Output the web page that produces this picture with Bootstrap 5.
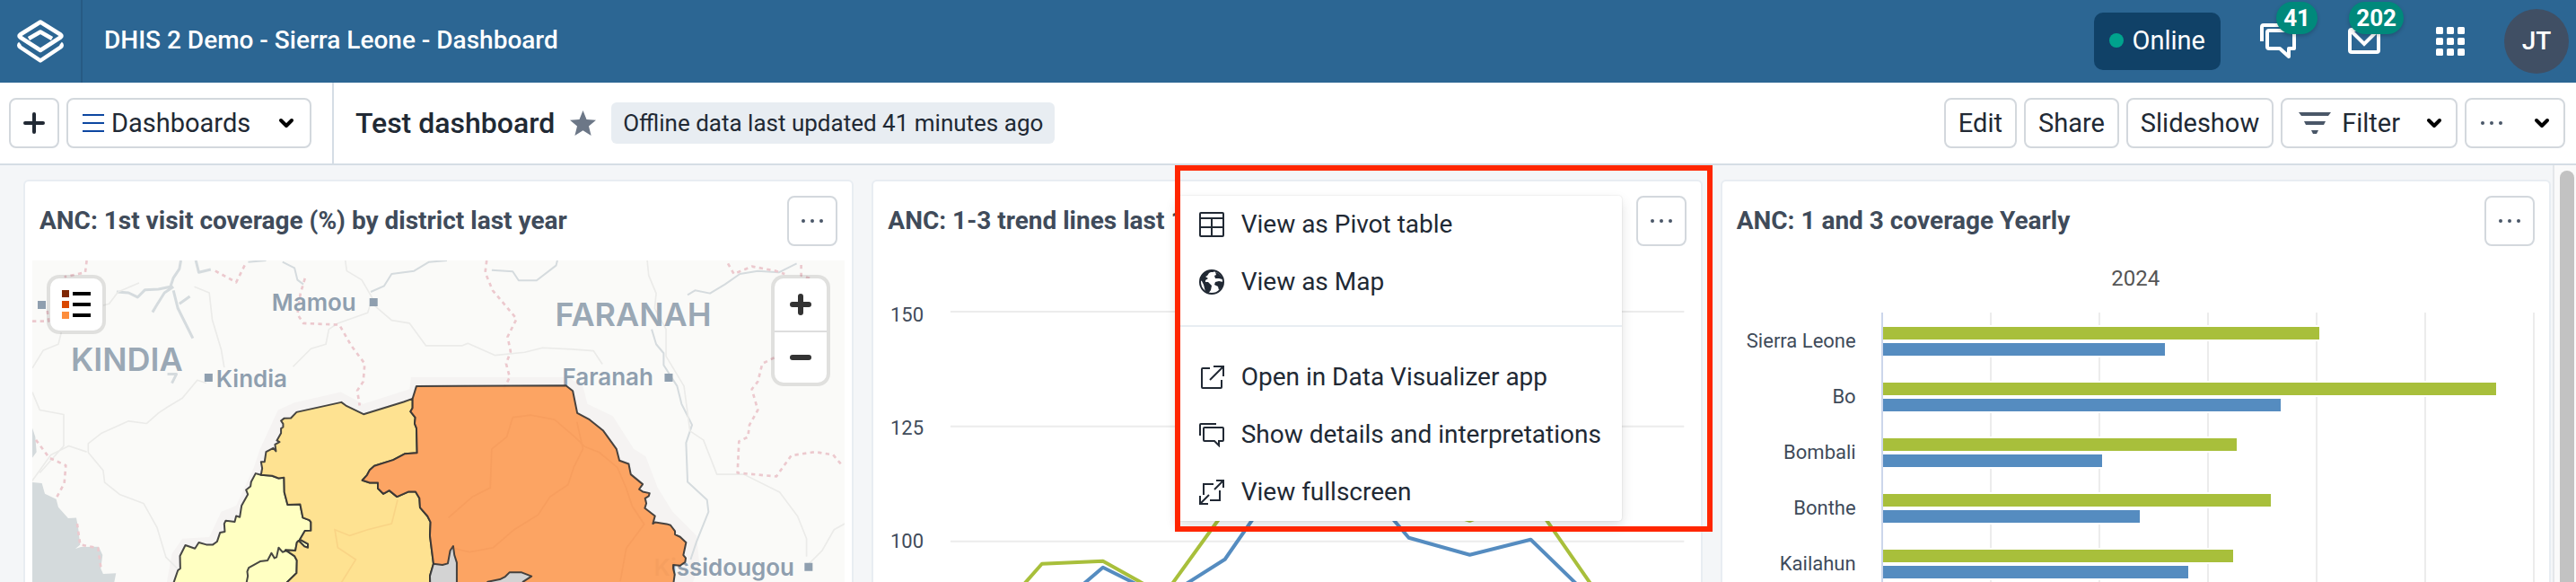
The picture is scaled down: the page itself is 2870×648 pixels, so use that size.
<!DOCTYPE html>
<html lang="en">
<head>
<meta charset="utf-8">
<meta name="viewport" content="width=device-width, initial-scale=1">
<title>DHIS 2 Demo - Sierra Leone - Dashboard</title>
<link href="https://cdn.jsdelivr.net/npm/bootstrap@5.3.0/dist/css/bootstrap.min.css" rel="stylesheet">
<style>
  :root { --line: #d5dde5; --ink: #212934; --slate: #404b5a; --green: #a8bf3b; --blue: #558cc0; }
  body { font-family: Roboto, "Liberation Sans", sans-serif; font-size: 28px; line-height: 32px; color: var(--ink); background: #f4f6f8; }
  svg { display: block; flex-shrink: 0; }

  .app-header { height: 92px; background: #2c6693; color: #fff; }
  .app-logo { width: 92px; border-right: 2px solid #275a84; }
  .app-name { padding: 0 0 2px 24px; font-weight: 500; }
  .status-pill { height: 64px; padding: 0 17px 2px; gap: 10px; margin-right: 16px; border-radius: 10px; background: #104167; font-size: 29px; }
  .status-dot { width: 16px; height: 16px; border-radius: 50%; background: #00a38d; }
  .header-btn { width: 96px; color: #fff; }
  .count-badge { position: absolute; top: 2px; right: 4px; height: 36px; padding: 0 8px; border-radius: 18px; background: #00897b; font-size: 26px; line-height: 36px; font-weight: 700; box-shadow: 0 2px 4px rgba(0,0,0,.2); }
  .avatar { width: 72px; height: 72px; margin: 0 8px 0 12px; border-radius: 50%; background: #404f64; color: #fff; font-weight: 500; }

  .toolbar { height: 92px; background: #fff; border-bottom: 2px solid var(--line); }
  .toolbar-start { width: 372px; padding-left: 10px; gap: 8px; border-right: 2px solid var(--line); }
  .toolbar-title { padding-left: 24px; gap: 17px; }
  .toolbar-title h1 { font-size: 32px; line-height: 36px; font-weight: 500; }
  .info-tag { padding: 7px 13px; border-radius: 6px; background: #e8edf2; font-size: 26px; }
  .toolbar-end { gap: 8px; padding-right: 12px; }
  .tool-btn { height: 56px; padding: 0 14px; border: 2px solid #d3d8dd; border-radius: 8px; background: #fff; color: var(--ink); font-size: 29px; line-height: 32px; white-space: nowrap; }
  .square-btn { width: 56px; padding: 0; }
  .more-btn { width: 112px; }

  .board { padding: 16px 2px 0 26px; }
  .board .row { --bs-gutter-x: 20px; }
  .tile { border: 2px solid #e8edf2; border-radius: 6px; background: #fff; }
  .tile-head { padding: 16px; }
  .tile-head h2 { font-size: 28px; line-height: 32px; font-weight: 700; color: var(--slate); }
  .scroll-track { width: 26px; border-left: 2px solid #e4e7ea; background: #fafafa; padding: 6px 2px 0 6px; }
  .scroll-thumb { height: 1200px; border-radius: 8px; background: #c2c2c2; }

  .map-box { margin: 0 8px; background: #fafaf8; }
  .map-ctrl { position: absolute; top: 16px; border: 4px solid rgba(0,0,0,.1); border-radius: 14px; background: #fff; background-clip: padding-box; }
  .map-ctrl button { width: 58px; height: 58px; }
  .map-ctrl button + button { border-top: 2px solid #ddd !important; }
  .legend-ctrl { left: 16px; }
  .zoom-ctrl { right: 16px; }

  .item-menu { display: block; top: 18px; right: 100px; width: 496px; padding: 0; border: 0; border-radius: 4px; box-shadow: 0 0 2px rgba(0,0,0,.14), 0 6px 14px rgba(0,0,0,.12); font-size: 28px; }
  .item-menu .dropdown-item { height: 64px; padding: 0 25px; gap: 19px; color: var(--ink); }
  .item-menu .dropdown-divider { margin: 16px 0 24px; border-top: 2px solid #e8edf2; opacity: 1; }
  .callout-frame { position: absolute; top: -16px; left: 348px; right: -1px; height: 408px; border: 6px solid #ff2600; z-index: 1001; pointer-events: none; }

  .chart-title { height: 58px; padding-top: 4px; font-size: 24px; color: #555; }
  .bar-row { height: 62px; padding-right: 16px; }
  .bar-label { width: 149px; margin-right: 28px; padding-top: 2px; font-size: 22px; color: var(--slate); }
  .bar-plot { padding-top: 14px; border-left: 2px solid #ccd6eb; background: repeating-linear-gradient(to right, transparent 0, transparent calc(100% / 6 - 2px), #ececec calc(100% / 6 - 2px), #ececec calc(100% / 6)); }
  .bar { height: 18px; border: solid #fff; border-width: 2px 2px 2px 0; }
  .bar-green { background: var(--green); }
  .bar-blue { background: var(--blue); }
</style>
</head>
<body>
<div class="d-flex flex-column vh-100 overflow-hidden">

  <header class="app-header d-flex align-items-center flex-shrink-0">
    <a href="#" class="app-logo h-100 d-flex align-items-center justify-content-center" aria-label="Home">
      <svg width="56" height="56" viewBox="14 16 56 56" fill="none" stroke="#fff" stroke-width="4.5" stroke-linejoin="round">
        <path d="M42 22.500 64.500 36.500Q66.500 38 64.500 39.500L42 54 19.500 39.500Q17.500 38 19.500 36.500Z"/>
        <path d="M29 41 42 33.500 55 41"/>
        <path d="M19.500 46.500Q17 48.500 19.500 50.500L42 65.500 64.500 50.500Q67 48.500 64.500 46.500"/>
      </svg>
    </a>
    <span class="app-name">DHIS 2 Demo - Sierra Leone - Dashboard</span>
    <div class="status-pill ms-auto d-flex align-items-center"><span class="status-dot"></span>Online</div>
    <button class="header-btn btn p-0 h-100 rounded-0 border-0 position-relative d-flex align-items-center justify-content-center" aria-label="Interpretations">
      <svg width="48" height="48" viewBox="2514 20 48 48" fill="none" stroke="#fff" stroke-width="4"><path d="M2520 44V28q0-2 2-2h20"/><path d="M2528 32h26q2 0 2 2v18h-6v9l-10-9h-12q-2 0-2-2V34q0-2 2-2z" stroke-linejoin="round"/></svg>
      <span class="count-badge">41</span>
    </button>
    <button class="header-btn btn p-0 h-100 rounded-0 border-0 position-relative d-flex align-items-center justify-content-center" aria-label="Messages">
      <svg width="48" height="48" viewBox="2610 20 48 48" fill="none" stroke="#fff" stroke-width="4"><path d="M2620 31h28q2 0 2 2v21q0 2-2 2h-28q-2 0-2-2V33q0-2 2-2z"/><path d="M2618 31l16 16 16-16"/></svg>
      <span class="count-badge">202</span>
    </button>
    <button class="header-btn btn p-0 h-100 rounded-0 border-0 d-flex align-items-center justify-content-center" aria-label="Apps">
      <svg width="32" height="32" fill="#fff"><rect width="8" height="8" rx="1.500"/><rect x="12" width="8" height="8" rx="1.500"/><rect x="24" width="8" height="8" rx="1.500"/><rect y="12" width="8" height="8" rx="1.500"/><rect x="12" y="12" width="8" height="8" rx="1.500"/><rect x="24" y="12" width="8" height="8" rx="1.500"/><rect y="24" width="8" height="8" rx="1.500"/><rect x="12" y="24" width="8" height="8" rx="1.500"/><rect x="24" y="24" width="8" height="8" rx="1.500"/></svg>
    </button>
    <button class="avatar border-0 p-0">JT</button>
  </header>

  <nav class="toolbar d-flex align-items-center flex-shrink-0" aria-label="Dashboard">
    <div class="toolbar-start h-100 d-flex align-items-center">
      <button class="tool-btn square-btn d-flex align-items-center justify-content-center" aria-label="New dashboard">
        <svg width="24" height="24" stroke="#212934" stroke-width="4" stroke-linecap="round"><path d="M12 2v20M2 12h20"/></svg>
      </button>
      <button class="tool-btn d-flex align-items-center px-3">
        <svg class="me-2" width="24" height="20" stroke="#0d47a1" stroke-width="2"><path d="M0 1h24M0 10h24M0 19h24"/></svg>
        Dashboards
        <svg class="ms-4" width="26" height="12" fill="none" stroke="#000" stroke-width="4" stroke-linecap="round" stroke-linejoin="round"><path d="M10 3l6 6 6-6"/></svg>
      </button>
    </div>
    <div class="toolbar-title d-flex align-items-center">
      <h1 class="mb-0">Test dashboard</h1>
      <svg width="29" height="28" viewBox="0 0 29 28" fill="#6c7787"><path d="M14.500 0l4 10 10.500.7-8 6.900 2.600 10.400-9.100-5.700L5.400 28 8 17.600 0 10.700 10.500 10z"/></svg>
      <span class="info-tag">Offline data last updated 41 minutes ago</span>
    </div>
    <div class="toolbar-end ms-auto d-flex">
      <button class="tool-btn">Edit</button>
      <button class="tool-btn">Share</button>
      <button class="tool-btn">Slideshow</button>
      <button class="tool-btn d-flex align-items-center">
        <svg class="ms-1 me-2" width="36" height="24" fill="#4a5768"><path d="M0 0h36l-3 4H3zM6 10h24l-2 4H8zM14 20h8l-2 4h-4z"/></svg>
        <span class="px-1">Filter</span>
        <svg class="ms-3" width="28" height="12" fill="none" stroke="#000" stroke-width="4" stroke-linecap="round" stroke-linejoin="round"><path d="M12 3l6 6 6-6"/></svg>
      </button>
      <button class="tool-btn more-btn d-flex align-items-center justify-content-between" aria-label="More">
        <svg width="28" height="4" fill="#4a5768"><circle cx="4" cy="2" r="2"/><circle cx="14" cy="2" r="2"/><circle cx="24" cy="2" r="2"/></svg>
        <svg width="20" height="12" fill="none" stroke="#000" stroke-width="4" stroke-linecap="round" stroke-linejoin="round"><path d="M4 3l6 6 6-6"/></svg>
      </button>
    </div>
  </nav>

  <main class="d-flex flex-fill overflow-hidden">
    <div class="board flex-fill">
      <div class="row row-cols-3">

        <div class="col">
          <section class="tile h-100">
            <div class="tile-head d-flex align-items-center justify-content-between">
              <h2 class="mb-0">ANC: 1st visit coverage (%) by district last year</h2>
              <button class="tool-btn square-btn d-flex align-items-center justify-content-center" aria-label="Item menu"><svg width="24" height="4" fill="#4a5768"><circle cx="2" cy="2" r="2"/><circle cx="12" cy="2" r="2"/><circle cx="22" cy="2" r="2"/></svg></button>
            </div>
            <div class="map-box position-relative">
              <svg class="w-100 h-auto" viewBox="36 290 906 370" font-family="Inter, sans-serif" font-weight="600" fill="#8f9faf">
                <g transform="translate(0 270) scale(.3333)" fill="none" stroke-linejoin="round">
                  <path fill="#f5f3f2" d="M550 1180 575 1040 610 990 700 985 740 900 790 880 850 750 870 690 930 560 985 535 1140 500 1215 540 1370 490 1375 450 1900 450 1950 480 1965 540 2050 580 2120 690 2160 715 2200 820 2250 900 2330 980 2340 1080 2300 1180z"/>
                  <path fill="#d4dadc" d="M108 802l32 3 10 35 38 18 7 27 33 37 27-2 6 30 7 60-16 14 18-6 60-1 13 28-6 45 8 18 43-2-16 80H108zM108 620l10 30 4 50-14 20z"/>
                  <g stroke="#d5dbde" stroke-width="9">
                    <path d="M390 165l40 3 30 15 25-25 45-2 40-8 10-30 20-30 5-28M580 148l-30 20-25 40-15 25M580 160l15 60 30 60 20 40M600 205l35-25M655 60l10 40 40-10M560 440l30 0-15 30"/>
                    <path stroke-width="6" d="M830 65l60-5M945 65l40 20 10 40 20 15M1240 165l45-20 25-40 75-10 50-30 60-5M1645 92l70 5 20 30 60 0 65-50 5-20M2300 175l25-15 50 10 50-30 50-35 60-10 70 5 60-30M2180 290l15 50 25 30 0 40 45 70 15 60 35 70-20 60 5 130 65 60 5 40-40 100-20 60"/>
                  </g>
                  <g stroke="#ebebe9" stroke-width="5">
                    <path d="M345 210l20-5 30-40 70-30M205 300l-10 40-50 20-37 60M108 500l25 60 80 15 0 105-80 90M750 418l-10-60-30-100-10-90-50-20M690 470l-30-10-50 60-50 30-30 20-40 35-60-8-90 40-45 35 0 30 50 60 5 40 50 40 80 30 45 80 30 100 40 40M1155 60l5 35 50 30 35 60-15 50-100 35-30 20-10 50-50 15-60 60M1240 200l70 60 60 10 55 75 120 0 20-8 90 40 100-10 60-15 100 5 70 5 30 45M2165 60l5 50 25 60-5 50 38 70 0 90 60 100 20 150 45 30 45 115 90 0 120 60 60 80 30 75 0 60M2700 1080l50-50 40-70 36-20M290 700l-60-20-60 30-65 90"/>
                  </g>
                  <g stroke="#ecc9ce" stroke-width="8" stroke-dasharray="13 13">
                    <path d="M290 60l-5 40-70 15M108 263l55 0-5-35M720 95l70 38 30-60M1020 120l-15 50-10 70 20 30 120 5 40 70 45 60-5 60-20 30 8 50M120 660l45 60 55 25-5 60-30 55M258 940l10 70 60 12 10 70M1628 60l-5 40 25 60 80 95-30 60 10 50-15 40 12 45-20 40M2435 70l20 35 60-25 80 15 30 10M2680 75l0 35 30 10M2590 385l-40 20-15 60-20 25 20 70-28 50-5 40-30 15-5 105 130 12 50-70 80-12 60 10 30 35"/>
                  </g>
                </g>
                <g font-size="26">
                  <text x="303" y="346">Mamou</text><text x="241" y="431">Kindia</text>
                  <text x="627" y="429">Faranah</text><text x="729" y="641">Kissidougou</text><text x="22" y="346">a</text>
                </g>
                <g font-size="36" fill="#9aa8b5"><text x="79" y="413">KINDIA</text><text x="619" y="363">FARANAH</text></g>
                <path d="M42 335h9v9h-9zM412 332h9v9h-9zM228 416h9v9h-9zM741 416h9v9h-9zM897 627h9v9h-9z"/>
                <g transform="translate(0 270) scale(.3333)" stroke="#333" stroke-width="6" stroke-linejoin="round" fill-opacity=".95" stroke-opacity=".9">
                  <path fill="#ffffbf" d="M855 772l18 5 37 3 22 8 18-2 1 49 11 42 42-2 9 45 22 8 5 7v28l-20 1-17 29 27 15v12l-12-4-19-19-6 6-5 27-33-2 30 20 8 15-1 42-30 29-60 60H560l22-60 13-38 8-6-1-42 18-36 32 11 13-20 25 7h22l14-10 10-30 16-3-2-27 5-10 30 4 5-20 12 4 6-38 21-38-6-15 15-12 2-15z"/>
                  <path fill="none" d="M958 1030l-13 5-13-15-7 32-7 3-10-17-13 25-25 3-38 21-5 13 2 15-8 40"/>
                  <path fill="#fee08b" d="M1380 522 1350 533 1216 574 1157 545 1142 534 992 567 973 587 950 588 940 596 947 606 947 617 940 622 940 637 926 662 935 667 920 675 923 698 914 687 890 700 885 733 873 733 877 755 873 777 910 780 932 788 950 786 951 835 962 877 1004 875 1013 920 1035 928 1040 935 1040 963 1020 964 1003 993 1030 1008 1030 1020 1018 1016 999 997 993 1003 988 1030 955 1028 985 1048 993 1063 992 1105 962 1134 922 1174 1440 1174 1438 1115 1450 1074 1438 980 1440 935 1430 915 1405 886 1403 855 1390 833 1367 833 1328 850 1302 829 1282 840 1264 822 1264 803 1237 803 1212 795 1228 777 1237 760 1252 747 1315 727 1355 706 1395 703 1393 620 1387 605 1389 585 1373 565 1380 553z"/>
                  <path fill="#fc9f5b" d="M1393 480 1893 478 1916 496 1931 570 1972 592 2017 628 2062 690 2072 729 2103 740 2110 775 2150 808 2138 825 2150 833 2173 838 2170 848 2158 855 2162 872 2157 888 2191 914 2184 940 2192 935 2230 941 2243 945 2258 965 2258 976 2275 984 2295 1003 2286 1045 2294 1055 2292 1068 2275 1080 2252 1078 2252 1090 2257 1110 2248 1174 1450 1174 1450 1074 1438 980 1440 935 1430 915 1405 886 1403 855 1390 833 1367 833 1328 850 1302 829 1282 840 1264 822 1264 803 1237 803 1212 795 1228 777 1237 760 1252 747 1315 727 1355 706 1395 703 1393 620 1387 605 1389 585 1373 565 1380 553 1380 522z"/>
                  <path fill="#d3d3d3" fill-opacity="1" d="M1450 1074 1480 1078 1498 1073 1506 1030 1516 1015 1520 1045 1528 1070 1528 1174 1440 1174 1438 1115zM1592 1174 1632 1134 1672 1126 1690 1117 1704 1103 1745 1103 1778 1116 1750 1134 1720 1174z"/>
                </g>
                <g transform="translate(0 270) scale(.3333)" fill="none" stroke="#d9763d" stroke-opacity=".12" stroke-width="5">
                  <path d="M1500 920l80-70 60-30 5-130 50-40 20-65 60-8 80 15 70 60 30 30 50 20 60 50 30 70 20 60 40 60-60 80-20 110M1930 600l20 90-30 60-20 60-60 40-40 60-80 50-70 60-80 15-60-15M1330 860l-20 80-80 20-60 20-50-20 10 60 60 40-50 80"/>
                </g>
              </svg>
              <div class="map-ctrl legend-ctrl">
                <button class="btn p-0 border-0 d-flex align-items-center justify-content-center" aria-label="Legend">
                  <svg width="32" height="32"><path fill="#7f2704" d="M0 0h8v8H0z"/><path fill="#d94801" d="M0 12h8v8H0z"/><path fill="#fd8d3c" d="M0 24h8v8H0z"/><path d="M12 2h20v4H12zM12 14h20v4H12zM12 26h20v4H12z"/></svg>
                </button>
              </div>
              <div class="map-ctrl zoom-ctrl">
                <button class="btn p-0 border-0 rounded-0 d-flex align-items-center justify-content-center" aria-label="Zoom in"><svg width="24" height="24" stroke="#333" stroke-width="6" stroke-linecap="round"><path d="M12 3v18M3 12h18"/></svg></button>
                <button class="btn p-0 border-0 rounded-0 d-flex align-items-center justify-content-center" aria-label="Zoom out"><svg width="24" height="24" stroke="#333" stroke-width="6" stroke-linecap="round"><path d="M3 12h18"/></svg></button>
              </div>
            </div>
          </section>
        </div>

        <div class="col position-relative">
          <section class="tile h-100">
            <div class="tile-head d-flex align-items-center justify-content-between">
              <h2 class="mb-0">ANC: 1-3 trend lines last 12</h2>
              <button class="tool-btn square-btn d-flex align-items-center justify-content-center" aria-label="Item menu" aria-expanded="true"><svg width="24" height="4" fill="#4a5768"><circle cx="2" cy="2" r="2"/><circle cx="12" cy="2" r="2"/><circle cx="22" cy="2" r="2"/></svg></button>
            </div>
            <svg class="w-100 h-auto" viewBox="974 290 922 370">
              <path d="M1060 347h818M1060 475h818M1060 603h818" stroke="#ececec" stroke-width="2"/>
              <g font-size="22" fill="#404b5a"><text x="993" y="358">150</text><text x="993" y="484">125</text><text x="993" y="610">100</text></g>
              <g fill="none" stroke-width="4" stroke-linejoin="round">
                <path stroke="#a8bf3b" d="M1094 705l68-77 68-3 68 38 68-94 68-80 69 20 68 49 68 22 68-26 68 98"/>
                <path stroke="#558cc0" d="M1162 690l68-58 68 34 68-43 68-98 69-6 68 80 68 19 68-17 68 66"/>
              </g>
            </svg>
          </section>

          <ul class="item-menu dropdown-menu show">
            <li><button class="dropdown-item d-flex align-items-center"><svg width="28" height="28" fill="none" stroke="#212934" stroke-width="2"><rect x="1" y="1" width="26" height="26" rx="1"/><path d="M1 7h26M1 17h26M14 7v20"/></svg>View as Pivot table</button></li>
            <li><button class="dropdown-item d-flex align-items-center"><svg width="28" height="28"><circle cx="14" cy="14" r="13" fill="#fff" stroke="#212934" stroke-width="2"/><path fill="#212934" d="M1 12C2 5 7 1 14 1l3 2-4 0-2 1-2 3-2 1 3 2-3 2 0 2 3 0 4 4-1 5-3 4C6 25 6 20 5 17L3 13zM18 3c5 1 8 6 8 8l-4-1-4 0-1-3 2-1zM18 14l4-1 5 1c0 4-2 7-5 9l-1-4-4-2z"/></svg>View as Map</button></li>
            <li><hr class="dropdown-divider"></li>
            <li><button class="dropdown-item d-flex align-items-center"><svg width="28" height="28" fill="none" stroke="#212934" stroke-width="2"><path d="M12 4H4q-1 0-1 1v20q0 1 1 1h20q1 0 1-1v-8M16 2h11v11M27 2 12 17"/></svg>Open in Data Visualizer app</button></li>
            <li><button class="dropdown-item d-flex align-items-center"><svg width="28" height="28" fill="none" stroke="#212934" stroke-width="2"><path d="M1 15V3q0-1 1-1h17M6 6h20q1 0 1 1v13q0 1-1 1h-4v5l-5-5H6q-1 0-1-1V7q0-1 1-1z"/></svg>Show details and interpretations</button></li>
            <li><button class="dropdown-item d-flex align-items-center"><svg width="28" height="28" fill="none" stroke="#212934" stroke-width="2"><path d="M16 5H5v12M12 23h11V12M19 1h8v8M27 1 17 11M1 18v9h9M1 27 11 17"/></svg>View fullscreen</button></li>
          </ul>
          <div class="callout-frame"></div>
        </div>

        <div class="col">
          <section class="tile h-100">
            <div class="tile-head d-flex align-items-center justify-content-between">
              <h2 class="mb-0">ANC: 1 and 3 coverage Yearly</h2>
              <button class="tool-btn square-btn d-flex align-items-center justify-content-center" aria-label="Item menu"><svg width="24" height="4" fill="#4a5768"><circle cx="2" cy="2" r="2"/><circle cx="12" cy="2" r="2"/><circle cx="22" cy="2" r="2"/></svg></button>
            </div>
            <div class="chart-title text-center">2024</div>
            <div class="bar-row d-flex align-items-center"><span class="bar-label text-end">Sierra Leone</span><div class="bar-plot h-100 flex-fill"><div class="bar bar-green" style="width:67.3%"></div><div class="bar bar-blue" style="width:43.6%"></div></div></div>
            <div class="bar-row d-flex align-items-center"><span class="bar-label text-end">Bo</span><div class="bar-plot h-100 flex-fill"><div class="bar bar-green" style="width:94.4%"></div><div class="bar bar-blue" style="width:61.3%"></div></div></div>
            <div class="bar-row d-flex align-items-center"><span class="bar-label text-end">Bombali</span><div class="bar-plot h-100 flex-fill"><div class="bar bar-green" style="width:54.6%"></div><div class="bar bar-blue" style="width:33.9%"></div></div></div>
            <div class="bar-row d-flex align-items-center"><span class="bar-label text-end">Bonthe</span><div class="bar-plot h-100 flex-fill"><div class="bar bar-green" style="width:59.8%"></div><div class="bar bar-blue" style="width:39.7%"></div></div></div>
            <div class="bar-row d-flex align-items-center"><span class="bar-label text-end">Kailahun</span><div class="bar-plot h-100 flex-fill"><div class="bar bar-green" style="width:54.0%"></div><div class="bar bar-blue" style="width:47.2%"></div></div></div>
          </section>
        </div>

      </div>
    </div>
    <div class="scroll-track flex-shrink-0 overflow-hidden" aria-hidden="true"><div class="scroll-thumb"></div></div>
  </main>
</div>
<script src="https://cdn.jsdelivr.net/npm/bootstrap@5.3.0/dist/js/bootstrap.bundle.min.js"></script>
</body>
</html>
